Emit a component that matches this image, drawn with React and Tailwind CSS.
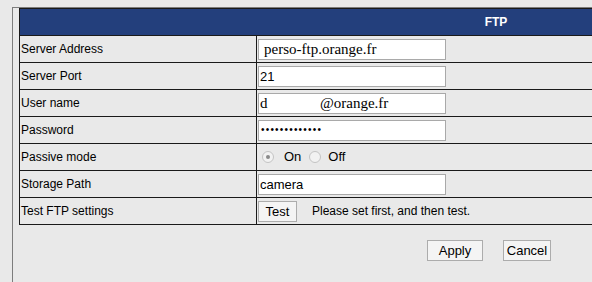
import React from "react";

const rows = [
  { label: "Server Address", kind: "serif", value: "perso-ftp.orange.fr" },
  { label: "Server Port", kind: "sans", value: "21" },
  { label: "User name", kind: "user" },
  { label: "Password", kind: "password" },
  { label: "Passive mode", kind: "radio" },
  { label: "Storage Path", kind: "sans", value: "camera" },
  { label: "Test FTP settings", kind: "test" },
];

function Field({ children, className = "" }) {
  return (
    <div className={`w-[188px] h-[21px] bg-white border border-[#a9a9a9] flex items-center ${className}`}>
      {children}
    </div>
  );
}

function Radio({ checked }) {
  return (
    <span className="w-[12px] h-[12px] rounded-full border border-[#c4c4c4] bg-[#f2f2f2] flex items-center justify-center">
      {checked && <span className="w-[4px] h-[4px] rounded-full bg-[#8a8a8a]" />}
    </span>
  );
}

function Value({ row }) {
  switch (row.kind) {
    case "serif":
      return (
        <Field className="pl-[5px]">
          <span className="font-['Liberation_Serif',serif] text-[15px] text-black leading-none">{row.value}</span>
        </Field>
      );
    case "sans":
      return (
        <Field className="pl-[1px]">
          <span className="text-[13px] text-black leading-none">{row.value}</span>
        </Field>
      );
    case "user":
      return (
        <Field className="pl-[1px]">
          <span className="font-['Liberation_Serif',serif] text-[15px] text-black leading-none w-[60px]">d</span>
          <span className="font-['Liberation_Serif',serif] text-[15px] text-black leading-none">@orange.fr</span>
        </Field>
      );
    case "password":
      return (
        <Field className="pl-[2px]">
          <span className="text-[10px] text-black leading-none tracking-[1.2px]">•••••••••••••</span>
        </Field>
      );
    case "radio":
      return (
        <div className="flex items-center pl-[4px] text-[13px] text-black">
          <Radio checked />
          <span className="ml-[10px]">On</span>
          <span className="ml-[8px]"><Radio /></span>
          <span className="ml-[7px]">Off</span>
        </div>
      );
    case "test":
      return (
        <div className="flex items-center">
          <button className="w-[39px] h-[21px] bg-[#f4f4f4] border border-[#acacac] text-[13px] text-black leading-none">
            Test
          </button>
          <span className="ml-[15px] text-[12px] text-black">Please set first, and then test.</span>
        </div>
      );
    default:
      return null;
  }
}

export default function App() {
  return (
    <div className="w-[592px] h-[282px] overflow-hidden bg-[#e9e9e9] pt-[7px] pl-[12px] font-['Liberation_Sans',Arial,sans-serif]">
      <div className="h-[300px] w-[1000px] border-l border-t border-[#7d7d7d] pl-[6px]">
        <div className="w-[954px] border border-[#1a1a1a]">
          <div className="h-[26px] bg-[#233f7c] flex items-center justify-center text-white text-[12px] font-bold">
            FTP
          </div>
          {rows.map((row) => (
            <div key={row.label} className="h-[27px] border-t border-[#1a1a1a] flex">
              <div className="w-[237px] shrink-0 border-r border-[#1a1a1a] flex items-center pl-[1px] text-[12px] text-black">
                {row.label}
              </div>
              <div className="flex items-center pl-[1px]">
                <Value row={row} />
              </div>
            </div>
          ))}
        </div>
        <div className="flex pl-[408px] pt-[15px] gap-[20px]">
          <button className="w-[56px] h-[21px] bg-[#f4f4f4] border border-[#acacac] text-[13px] text-black leading-none">
            Apply
          </button>
          <button className="w-[48px] h-[21px] bg-[#f4f4f4] border border-[#acacac] text-[13px] text-black leading-none">
            Cancel
          </button>
        </div>
      </div>
    </div>
  );
}
